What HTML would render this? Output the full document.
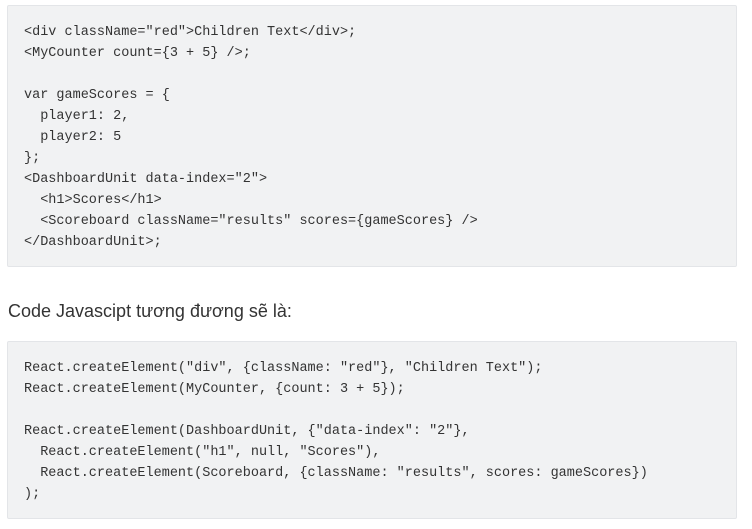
<!DOCTYPE html>
<html><head><meta charset="utf-8"><style>
body{margin:0;background:#fff;width:752px;height:529px;overflow:hidden;font-family:"Liberation Sans",sans-serif}
pre{position:absolute;left:7px;width:696px;margin:0;background:#f1f2f3;border:1px solid #e3e5e8;border-radius:2px;padding:16px 16px 10px;font-family:"Liberation Mono",monospace;font-size:13.5px;line-height:21px;color:#333}
p{position:absolute;left:8px;top:298px;margin:0;font-size:18px;color:#333;line-height:26px}
</style></head><body>
<pre style="top:5px;height:234px">&lt;div className="red"&gt;Children Text&lt;/div&gt;;
&lt;MyCounter count={3 + 5} /&gt;;

var gameScores = {
  player1: 2,
  player2: 5
};
&lt;DashboardUnit data-index="2"&gt;
  &lt;h1&gt;Scores&lt;/h1&gt;
  &lt;Scoreboard className="results" scores={gameScores} /&gt;
&lt;/DashboardUnit&gt;;</pre>
<p>Code Javascipt tương đương sẽ là:</p>
<pre style="top:341px;height:150px">React.createElement("div", {className: "red"}, "Children Text");
React.createElement(MyCounter, {count: 3 + 5});

React.createElement(DashboardUnit, {"data-index": "2"},
  React.createElement("h1", null, "Scores"),
  React.createElement(Scoreboard, {className: "results", scores: gameScores})
);</pre>
</body></html>
